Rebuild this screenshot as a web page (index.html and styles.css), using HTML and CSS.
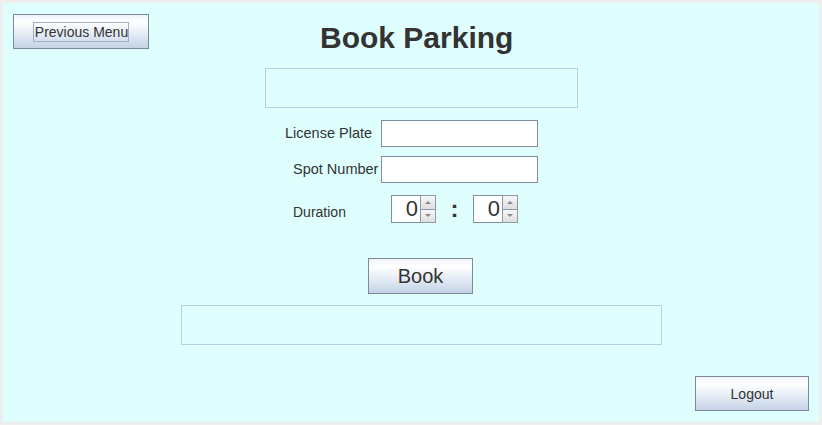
FILE: index.html
```html
<!DOCTYPE html>
<html>
<head>
<meta charset="utf-8">
<link rel="stylesheet" href="styles.css">
</head>
<body>
<div class="panel">
  <div class="header">
    <button class="btn btn-prev"><span class="focus">Previous Menu</span></button>
    <h1 class="title">Book Parking</h1>
  </div>
  <div class="msg-box msg-top"></div>
  <div class="row row-plate">
    <label class="lbl lbl-plate">License Plate</label>
    <div class="field"></div>
  </div>
  <div class="row row-spot">
    <label class="lbl lbl-spot">Spot Number</label>
    <div class="field"></div>
  </div>
  <div class="row row-dur">
    <label class="lbl lbl-dur">Duration</label>
    <div class="spinner">
      <div class="spin-val">0</div>
      <div class="spin-btns">
        <div class="spin-btn"><span class="arr-up"></span></div>
        <div class="spin-btn"><span class="arr-down"></span></div>
      </div>
    </div>
    <div class="colon">:</div>
    <div class="spinner">
      <div class="spin-val">0</div>
      <div class="spin-btns">
        <div class="spin-btn"><span class="arr-up"></span></div>
        <div class="spin-btn"><span class="arr-down"></span></div>
      </div>
    </div>
  </div>
  <button class="btn btn-book">Book</button>
  <div class="msg-box msg-bottom"></div>
  <button class="btn btn-logout">Logout</button>
</div>
</body>
</html>
```
FILE: styles.css
```css
html, body {
  margin: 0;
  padding: 0;
}
body {
  background: #eeeeee;
  padding: 3px;
  width: 822px;
  height: 425px;
  box-sizing: border-box;
  font-family: "Liberation Sans", Arial, sans-serif;
  color: #333333;
}
.panel {
  width: 816px;
  height: 419px;
  background: #dfffff;
  display: flex;
  flex-direction: column;
  align-items: flex-start;
}
.header {
  display: flex;
  align-items: flex-start;
  height: 50px;
}
.btn {
  font-family: "Liberation Sans", Arial, sans-serif;
  font-size: 14px;
  color: #333333;
  border: 1px solid #7a8a9b;
  background: linear-gradient(to bottom, #eef3f9 0%, #ffffff 22%, #e6edf5 55%, #c5d3e6 100%);
  padding: 0;
  margin: 0;
  box-sizing: border-box;
  display: flex;
  align-items: center;
  justify-content: center;
}
.btn-prev {
  margin: 11px 0 0 10px;
  width: 136px;
  height: 35px;
}
.focus {
  border: 1px solid #9fb0c4;
  padding: 1px 0 1px 1px;
  line-height: 16px;
}
.title {
  margin: 20px 0 0 171px;
  font-size: 30px;
  line-height: 30px;
  font-weight: bold;
  color: #333333;
}
.msg-box {
  border: 1px solid #b6cfe2;
  box-sizing: border-box;
  height: 40px;
}
.msg-top {
  margin: 15px 0 0 262px;
  width: 313px;
}
.row {
  display: flex;
  align-items: center;
}
.row-plate {
  margin: 12px 0 0 282px;
}
.row-spot {
  margin: 9px 0 0 290px;
}
.row-dur {
  margin: 12px 0 0 290px;
}
.lbl {
  font-size: 14.5px;
  color: #333333;
  line-height: 17px;
}
.lbl-plate { width: 96px; }
.lbl-spot { width: 88px; }
.lbl-dur {
  width: 98px;
  font-size: 14px;
  padding-top: 7px;
}
.field {
  width: 157px;
  height: 27px;
  box-sizing: border-box;
  background: #ffffff;
  border: 1px solid #7f8d9c;
}
.spinner {
  display: flex;
  height: 28px;
  width: 45px;
  box-sizing: border-box;
}
.spin-val {
  width: 29px;
  box-sizing: border-box;
  background: #ffffff;
  border: 1px solid #7f8d9c;
  border-right: none;
  font-size: 22px;
  line-height: 26px;
  text-align: right;
  padding-right: 2px;
  color: #333333;
}
.spin-btns {
  width: 16px;
  display: flex;
  flex-direction: column;
}
.spin-btn {
  flex: 1;
  box-sizing: border-box;
  border: 1px solid #8f9aa6;
  background: linear-gradient(to bottom, #f7f7f7, #dedede);
  display: flex;
  align-items: center;
  justify-content: center;
}
.spin-btn + .spin-btn {
  border-top: none;
}
.arr-up {
  width: 0;
  height: 0;
  border-left: 3px solid transparent;
  border-right: 3px solid transparent;
  border-bottom: 3px solid #8a8a8a;
}
.arr-down {
  width: 0;
  height: 0;
  border-left: 3px solid transparent;
  border-right: 3px solid transparent;
  border-top: 3px solid #8a8a8a;
}
.colon {
  width: 37px;
  text-align: center;
  font-size: 24px;
  font-weight: bold;
  line-height: 28px;
  color: #333333;
}
.btn-book {
  margin: 35px 0 0 365px;
  width: 105px;
  height: 36px;
  font-size: 20px;
}
.msg-bottom {
  margin: 11px 0 0 178px;
  width: 481px;
}
.btn-logout {
  margin: 31px 0 0 692px;
  width: 114px;
  height: 35px;
}
```
